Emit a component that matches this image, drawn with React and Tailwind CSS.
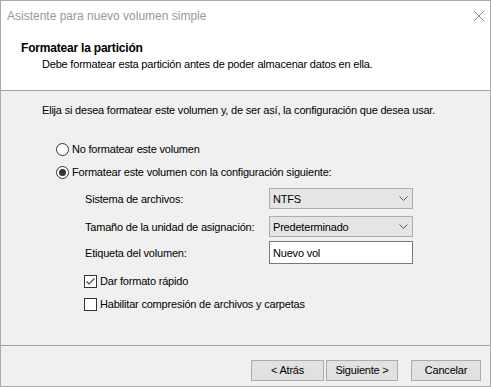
import React from "react";

const font = { fontFamily: '"Liberation Sans", Arial, sans-serif' };

const Radio = ({ checked, label }) => (
  <div className="flex items-center h-[16px]">
    <span className="w-[13px] h-[13px] rounded-full border border-[#333333] bg-white flex items-center justify-center">
      {checked && <span className="w-[7px] h-[7px] rounded-full bg-[#333333]" />}
    </span>
    <span className="ml-[3px]">{label}</span>
  </div>
);

const Check = ({ checked, label }) => (
  <div className="flex items-center h-[16px]">
    <span className="w-[13px] h-[13px] border border-[#333333] bg-white flex items-center justify-center">
      {checked && (
        <svg width="11" height="11" viewBox="0 0 11 11">
          <path d="M1.5 5.5 L4 8 L9.5 2.5" fill="none" stroke="#444" strokeWidth="1.2" />
        </svg>
      )}
    </span>
    <span className="ml-[3px]">{label}</span>
  </div>
);

const Select = ({ value }) => (
  <div className="w-[144px] h-[21px] border border-[#adadad] bg-[#e5e5e5] flex items-center justify-between pl-[3px] pr-[4px]">
    <span>{value}</span>
    <svg width="9" height="6" viewBox="0 0 9 6">
      <path d="M0.5 0.5 L4.5 4.5 L8.5 0.5" fill="none" stroke="#555" strokeWidth="1" />
    </svg>
  </div>
);

const Button = ({ width, children }) => (
  <div className={`${width} h-[21px] border border-[#adadad] bg-[#e1e1e1] flex items-center justify-center`}>
    {children}
  </div>
);

export default function App() {
  return (
    <div
      className="w-[491px] h-[387px] border border-[#aaaaaa] bg-[#f0f0f0] flex flex-col text-[11px] tracking-[-0.2px] text-black"
      style={font}
    >
      {/* title bar */}
      <div className="h-[29px] bg-white flex items-center justify-between pl-[6px] pr-[5px] shrink-0">
        <span className="text-[#999999] text-[12px] tracking-normal">Asistente para nuevo volumen simple</span>
        <svg width="12" height="12" viewBox="0 0 12 12">
          <path d="M1 1 L11 11 M11 1 L1 11" stroke="#888" strokeWidth="1" />
        </svg>
      </div>

      {/* header */}
      <div className="h-[61px] bg-white border-b border-[#a0a0a0] shrink-0 pl-[20px] pt-[10px]">
        <div className="font-bold text-[12px] leading-[16px]">Formatear la partición</div>
        <div className="pl-[21px] leading-[16px]">Debe formatear esta partición antes de poder almacenar datos en ella.</div>
      </div>

      {/* body */}
      <div className="flex-1 pl-[41px] pt-[11px] leading-[16px]">
        <div>Elija si desea formatear este volumen y, de ser así, la configuración que desea usar.</div>

        <div className="pl-[14px] mt-[23px] flex flex-col gap-[7px]">
          <Radio label="No formatear este volumen" />
          <Radio checked label="Formatear este volumen con la configuración siguiente:" />
        </div>

        <div className="pl-[43px] mt-[8px] flex flex-col">
          <div className="flex items-center h-[21px]">
            <span className="w-[184px]">Sistema de archivos:</span>
            <Select value="NTFS" />
          </div>
          <div className="flex items-center h-[21px] mt-[7px]">
            <span className="w-[184px]">Tamaño de la unidad de asignación:</span>
            <Select value="Predeterminado" />
          </div>
          <div className="flex items-center h-[23px] mt-[4px]">
            <span className="w-[184px]">Etiqueta del volumen:</span>
            <div className="w-[144px] h-[23px] border border-[#7a7a7a] bg-white flex items-center pl-[3px]">
              Nuevo vol
            </div>
          </div>
        </div>

        <div className="pl-[42px] mt-[9px] flex flex-col gap-[7px]">
          <Check checked label="Dar formato rápido" />
          <Check label="Habilitar compresión de archivos y carpetas" />
        </div>
      </div>

      {/* footer */}
      <div className="h-[41px] border-t border-[#a0a0a0] shrink-0 flex justify-end pt-[14px] pr-[9px]">
        <Button width="w-[73px]">&lt; Atrás</Button>
        <div className="ml-[2px]">
          <Button width="w-[72px]">Siguiente &gt;</Button>
        </div>
        <div className="ml-[13px]">
          <Button width="w-[70px]">Cancelar</Button>
        </div>
      </div>
    </div>
  );
}
